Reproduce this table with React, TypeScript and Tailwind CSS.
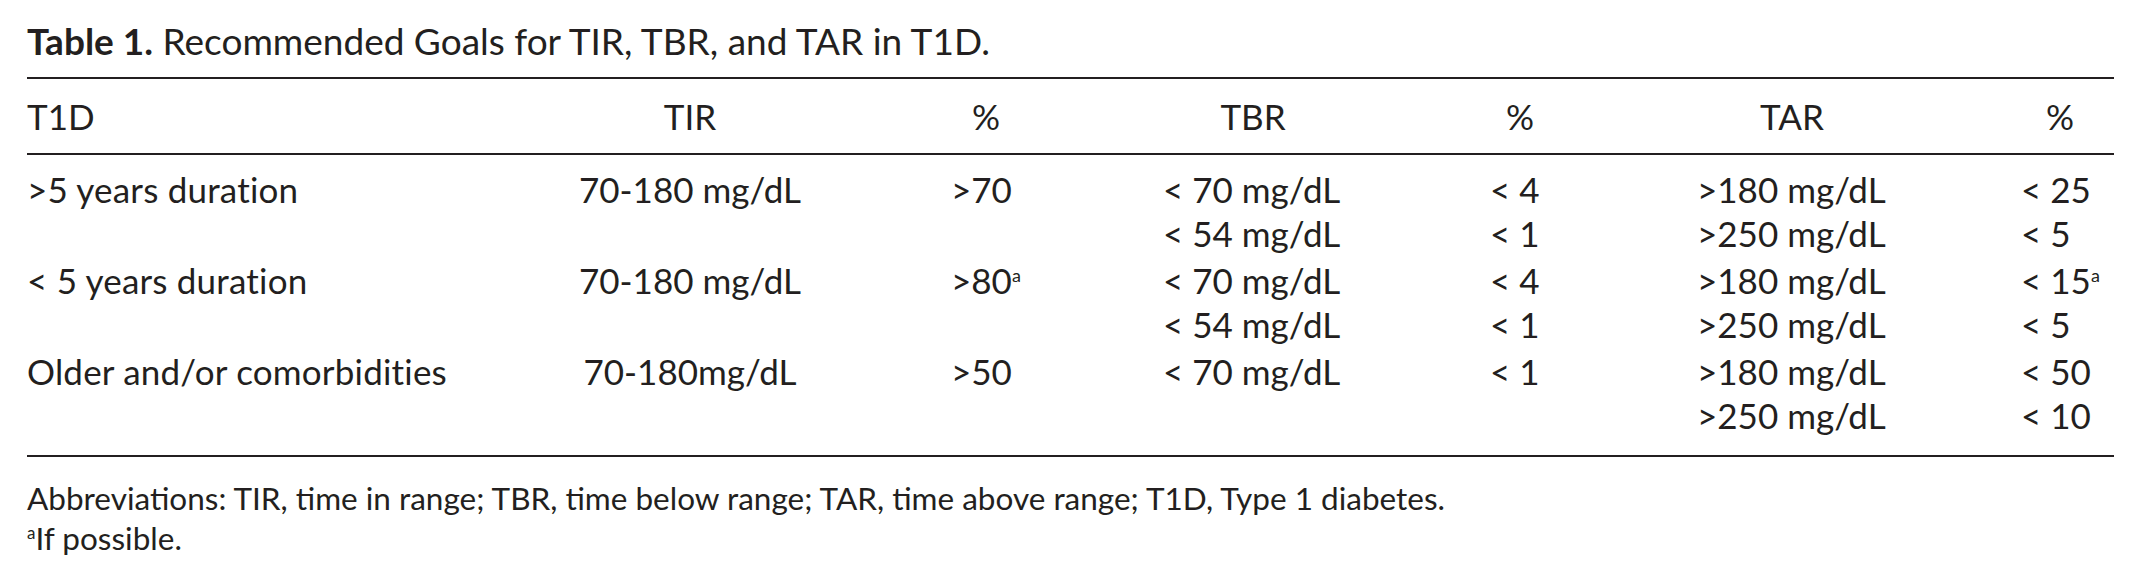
type Cell = { text: string; sup?: boolean };

type Row = {
  label: string;
  tir: Cell[];
  tirPct: Cell[];
  tbr: Cell[];
  tbrPct: Cell[];
  tar: Cell[];
  tarPct: Cell[];
};

const c = (text: string, sup = false): Cell => ({ text, sup });

const rows: Row[] = [
  {
    label: ">5 years duration",
    tir: [c("70-180 mg/dL")],
    tirPct: [c(">70")],
    tbr: [c("< 70 mg/dL"), c("< 54 mg/dL")],
    tbrPct: [c("< 4"), c("< 1")],
    tar: [c(">180 mg/dL"), c(">250 mg/dL")],
    tarPct: [c("< 25"), c("< 5")],
  },
  {
    label: "< 5 years duration",
    tir: [c("70-180 mg/dL")],
    tirPct: [c(">80", true)],
    tbr: [c("< 70 mg/dL"), c("< 54 mg/dL")],
    tbrPct: [c("< 4"), c("< 1")],
    tar: [c(">180 mg/dL"), c(">250 mg/dL")],
    tarPct: [c("< 15", true), c("< 5")],
  },
  {
    label: "Older and/or comorbidities",
    tir: [c("70-180mg/dL")],
    tirPct: [c(">50")],
    tbr: [c("< 70 mg/dL")],
    tbrPct: [c("< 1")],
    tar: [c(">180 mg/dL"), c(">250 mg/dL")],
    tarPct: [c("< 50"), c("< 10")],
  },
];

const cols = "grid grid-cols-[513px_300px_292px_242px_292px_252px_1fr]";

function Sup() {
  return <span className="relative -top-[12px] text-[18px]">a</span>;
}

function Lines({ items, className = "" }: { items: Cell[]; className?: string }) {
  return (
    <div className={`flex flex-col ${className}`}>
      {items.map((it, i) => (
        <div key={i} className="h-[44px] whitespace-pre">
          {it.text}
          {it.sup && <Sup />}
        </div>
      ))}
    </div>
  );
}

export default function App() {
  return (
    <div className="w-[2140px] h-[581px] bg-white pl-[27px] pr-[26px] font-['Lato',sans-serif] text-[35px] leading-[44px] text-[#231f20] tabular-nums">
      {/* caption */}
      <div className="h-[77px] pt-[18px] leading-[46px] text-[37px]">
        <span className="font-bold">Table 1.</span> Recommended Goals for TIR, TBR, and TAR in T1D.
      </div>

      {/* table */}
      <div className="border-y-2 border-[#231f20]">
        <div className={`${cols} h-[76px] items-center border-b-2 border-[#231f20]`}>
          <div>T1D</div>
          <div className="text-center">TIR</div>
          <div className="text-center">%</div>
          <div className="text-center">TBR</div>
          <div className="text-center">%</div>
          <div className="text-center">TAR</div>
          <div className="text-center pl-[88px]">%</div>
        </div>

        <div className="flex flex-col gap-[3px] pt-[12px] pb-[18px]">
          {rows.map((r) => (
            <div key={r.label} className={cols}>
              <div className="h-[44px] whitespace-pre tracking-[0.2px]">{r.label}</div>
              <Lines items={r.tir} className="text-center" />
              <Lines items={r.tirPct} className="pl-[111px]" />
              <Lines items={r.tbr} className="pl-[31px]" />
              <Lines items={r.tbrPct} className="pl-[116px]" />
              <Lines items={r.tar} className="pl-[31px]" />
              <Lines items={r.tarPct} className="pl-[103px]" />
            </div>
          ))}
        </div>
      </div>

      {/* notes */}
      <div className="mt-[21px] leading-[40px] text-[31.5px]">
        <div>Abbreviations: TIR, time in range; TBR, time below range; TAR, time above range; T1D, Type 1 diabetes.</div>
        <div>
          <span className="relative -top-[11px] text-[17px]">a</span>If possible.
        </div>
      </div>
    </div>
  );
}
